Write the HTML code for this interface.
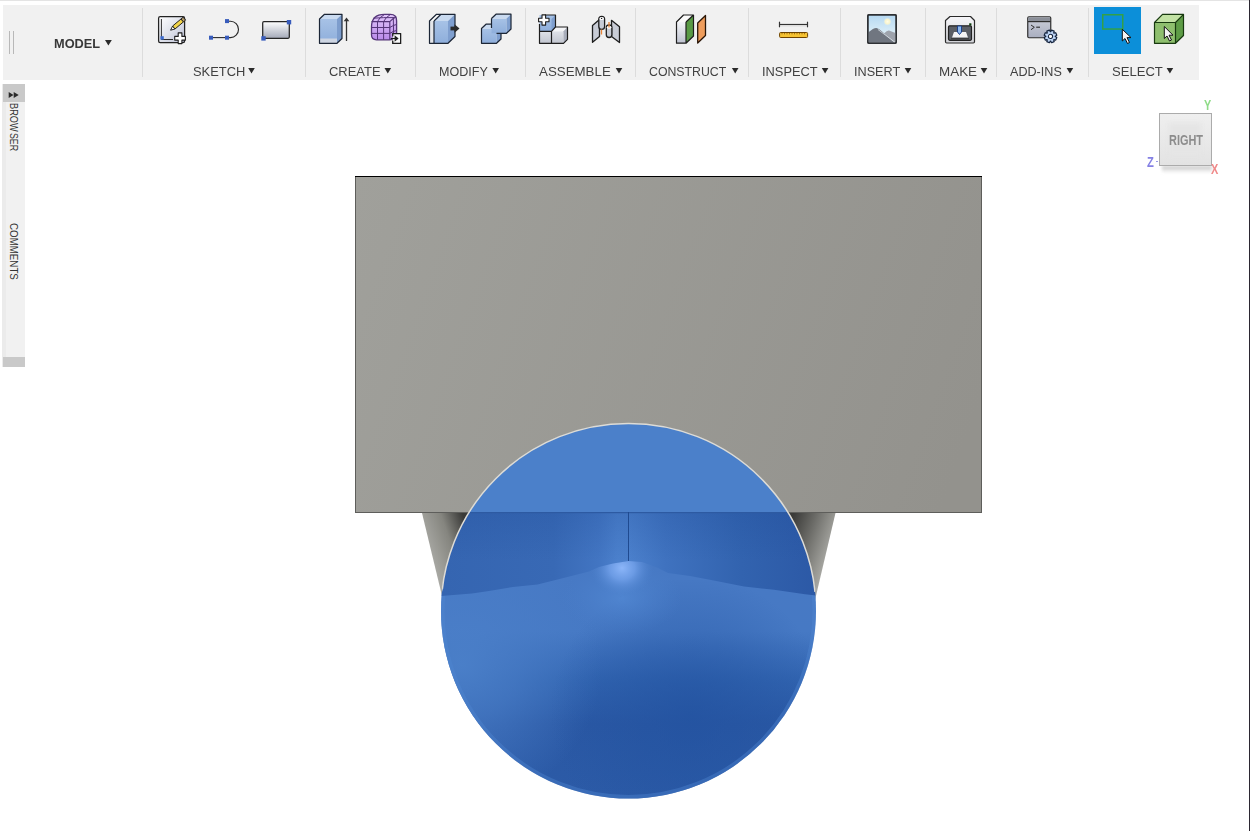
<!DOCTYPE html>
<html><head><meta charset="utf-8">
<style>
html,body{margin:0;padding:0;}
body{width:1250px;height:831px;position:relative;overflow:hidden;background:#fff;font-family:"Liberation Sans",sans-serif;}
.abs{position:absolute;}
#topline{left:0;top:0;width:1249px;height:1px;background:#e4e4e4;}
#rightline{left:1249px;top:0;width:1px;height:831px;background:#2b2731;}
#toolbar{left:3px;top:5px;width:1196px;height:75px;background:#f1f1f1;}
.div{position:absolute;top:8px;width:1px;height:69px;background:#dcdcdc;}
.lbl{position:absolute;top:64px;font-size:13.5px;color:#404040;white-space:nowrap;line-height:16px;transform-origin:0 0;}
.tri{position:absolute;width:0;height:0;border-left:3.5px solid transparent;border-right:3.5px solid transparent;border-top:5px solid #2e2e2e;}
svg.ic{position:absolute;overflow:visible;}
#sidebar{left:2px;top:84px;width:23px;height:283px;background:linear-gradient(90deg,#ebebeb 0,#ebebeb 4px,#f1f1f1 4px);}
#sbhead{left:3px;top:84px;width:22px;height:18px;background:#c9c9c9;}
#sbfoot{left:3px;top:357px;width:22px;height:10px;background:#c9c9c9;}
.vtxt{position:absolute;font-size:10px;color:#333;white-space:nowrap;transform-origin:0 0;transform:rotate(90deg);line-height:10px;}
</style></head>
<body>
<div class="abs" id="topline"></div>
<div class="abs" id="rightline"></div>
<div class="abs" id="toolbar"></div>

<!-- grip -->
<div class="abs" style="left:9px;top:31px;width:1px;height:23px;background:#b8b8b8"></div>
<div class="abs" style="left:13px;top:31px;width:1px;height:23px;background:#b8b8b8"></div>

<!-- dividers -->
<div class="div" style="left:142px"></div>
<div class="div" style="left:305px"></div>
<div class="div" style="left:415px"></div>
<div class="div" style="left:525px"></div>
<div class="div" style="left:635px"></div>
<div class="div" style="left:748px"></div>
<div class="div" style="left:840px"></div>
<div class="div" style="left:925px"></div>
<div class="div" style="left:996px"></div>
<div class="div" style="left:1088px"></div>

<!-- LABELS -->
<div class="lbl" style="left:54px;top:36px;font-weight:bold;color:#383838;transform:scaleX(0.945)">MODEL</div>
<div class="lbl" style="left:193.0px;transform:scaleX(0.954)">SKETCH</div>
<div class="lbl" style="left:329.0px;transform:scaleX(0.959)">CREATE</div>
<div class="lbl" style="left:439.0px;transform:scaleX(0.93)">MODIFY</div>
<div class="lbl" style="left:538.6px;transform:scaleX(0.986)">ASSEMBLE</div>
<div class="lbl" style="left:649.0px;transform:scaleX(0.912)">CONSTRUCT</div>
<div class="lbl" style="left:762.0px;transform:scaleX(0.95)">INSPECT</div>
<div class="lbl" style="left:853.8px;transform:scaleX(0.938)">INSERT</div>
<div class="lbl" style="left:939.0px;transform:scaleX(0.994)">MAKE</div>
<div class="lbl" style="left:1009.6px;transform:scaleX(0.933)">ADD-INS</div>
<div class="lbl" style="left:1112.0px;transform:scaleX(0.968)">SELECT</div>
<svg class="ic" style="left:0;top:0" width="1250" height="80"><g fill="#2b2b2b"><polygon points="105,40 111.8,40 108.4,45.5"/><polygon points="248.2,67.9 254.8,67.9 251.5,73.4"/><polygon points="384.5,67.9 391.1,67.9 387.8,73.4"/><polygon points="492.4,67.9 499.0,67.9 495.7,73.4"/><polygon points="615.7,67.9 622.3,67.9 619.0,73.4"/><polygon points="731.9,67.9 738.5,67.9 735.2,73.4"/><polygon points="821.8,67.9 828.4,67.9 825.1,73.4"/><polygon points="904.7,67.9 911.3,67.9 908.0,73.4"/><polygon points="980.7,67.9 987.3,67.9 984.0,73.4"/><polygon points="1066.6,67.9 1073.2,67.9 1069.9,73.4"/><polygon points="1166.6,67.9 1173.2,67.9 1169.9,73.4"/></g></svg>
<!-- /LABELS -->

<!-- ICONS -->
<svg class="ic" style="left:0;top:0" width="1250" height="60" viewBox="0 0 1250 60">
<defs>
 <linearGradient id="gSk" x1="0" y1="0" x2="1" y2="1"><stop offset="0" stop-color="#ffffff"/><stop offset="0.55" stop-color="#dcdfe9"/><stop offset="1" stop-color="#b9bdd2"/></linearGradient>
 <linearGradient id="gRc" x1="0" y1="0" x2="0" y2="1"><stop offset="0" stop-color="#ffffff"/><stop offset="1" stop-color="#a4a9b8"/></linearGradient>
 <linearGradient id="gBlueF" x1="0" y1="0" x2="0" y2="1"><stop offset="0" stop-color="#a7c2e6"/><stop offset="1" stop-color="#8eaedb"/></linearGradient>
 <linearGradient id="gPur" x1="0" y1="0" x2="0" y2="1"><stop offset="0" stop-color="#e2c6fb"/><stop offset="1" stop-color="#b98ae9"/></linearGradient>
 <linearGradient id="gGrayF" x1="0" y1="0" x2="0" y2="1"><stop offset="0" stop-color="#dfe2e8"/><stop offset="1" stop-color="#c2c6d0"/></linearGradient>
 <linearGradient id="gCon" x1="0" y1="0" x2="0" y2="1"><stop offset="0" stop-color="#f4f5f8"/><stop offset="1" stop-color="#bfc3d0"/></linearGradient>
 <linearGradient id="gSky" x1="0" y1="0" x2="0" y2="1"><stop offset="0" stop-color="#b5d8f1"/><stop offset="0.6" stop-color="#d8ecf7"/><stop offset="1" stop-color="#e8f3f8"/></linearGradient>
 <linearGradient id="gMk" x1="0" y1="0" x2="0" y2="1"><stop offset="0" stop-color="#f6f6f9"/><stop offset="1" stop-color="#d2d3d8"/></linearGradient>
 <linearGradient id="gAd" x1="0" y1="0" x2="0" y2="1"><stop offset="0" stop-color="#cdd0da"/><stop offset="1" stop-color="#a9aec0"/></linearGradient>
 <radialGradient id="gSun"><stop offset="0" stop-color="#fffde8"/><stop offset="0.6" stop-color="#fff6c8" stop-opacity="0.9"/><stop offset="1" stop-color="#d8ecf7" stop-opacity="0"/></radialGradient>
</defs>

<!-- SKETCH: create sketch -->
<rect x="158.6" y="16.6" width="26" height="26" rx="1.6" fill="url(#gSk)" stroke="#232323" stroke-width="1.25"/>
<polyline points="161.4,19 161.4,39.5 173,39.5" fill="none" stroke="#2e2e2e" stroke-width="1"/>
<rect x="160.4" y="36.2" width="3.4" height="3.4" fill="#3c6cd0"/>
<g transform="translate(170.6 30.2) rotate(-40)">
 <polygon points="0,0 4.2,-1.9 4.2,1.9" fill="#fff" stroke="#1e1e1e" stroke-width="0.9" stroke-linejoin="round"/>
 <rect x="4.2" y="-1.9" width="11" height="3.8" fill="#f2d448" stroke="#1e1e1e" stroke-width="0.9"/>
 <rect x="15.2" y="-1.9" width="2.8" height="3.8" fill="#b59b68" stroke="#1e1e1e" stroke-width="0.9"/>
</g>
<path d="M178.2 32.9 h3.7 v3.5 h3.5 v3.7 h-3.5 v3.5 h-3.7 v-3.5 h-3.5 v-3.7 h3.5 z" fill="#fff" stroke="#1e1e1e" stroke-width="1.1" stroke-linejoin="round"/>
<!-- SKETCH: arc -->
<line x1="211" y1="37.6" x2="227" y2="37.6" stroke="#2a2a2a" stroke-width="1.1"/>
<path d="M227 21.2 L230.5 21.2 A8 8.2 0 0 1 230.5 37.6 L227 37.6" fill="none" stroke="#2a2a2a" stroke-width="1.15"/>
<rect x="209" y="35.7" width="4" height="4" fill="#385cbc"/>
<rect x="225" y="35.7" width="4" height="4" fill="#385cbc"/>
<rect x="225" y="19.1" width="4" height="4" fill="#385cbc"/>

<!-- SKETCH: rectangle -->
<rect x="262.7" y="21.7" width="26.6" height="16.6" rx="1.2" fill="url(#gRc)" stroke="#262626" stroke-width="1.25"/>
<rect x="261.3" y="36.2" width="4.4" height="4.4" fill="#385cbc"/>
<rect x="286.8" y="20" width="4.4" height="4.4" fill="#385cbc"/>

<!-- CREATE: extrude -->
<polygon points="319.5,19 337,19 337,43.3 319.5,43.3" fill="url(#gBlueF)"/>
<polygon points="319.5,38.5 337,38.5 337,43.3 319.5,43.3" fill="#cdd5e2"/>
<polygon points="319.5,19 324.5,14.3 342,14.3 337,19" fill="#cadbf1"/>
<polygon points="337,19 342,14.3 342,38.5 337,43.3" fill="#7d9dcd"/>
<path d="M319.5 19 L324.5 14.3 L342 14.3 L342 38.5 L337 43.3 L319.5 43.3 Z" fill="none" stroke="#1c2636" stroke-width="1.2" stroke-linejoin="round"/>
<line x1="346.5" y1="41" x2="346.5" y2="20" stroke="#333" stroke-width="1.3"/>
<polygon points="343.7,21.3 346.5,17.4 349.3,21.3" fill="#333"/>

<!-- CREATE: form -->
<path d="M371.5 27 Q371.5 14.4 384.5 14.4 L390.5 14.4 Q396.6 14.4 396.6 21 L396.6 32.5 Q396.6 39.8 389.5 39.8 L376.5 39.8 Q371.5 39.8 371.5 34.8 Z" fill="url(#gPur)" stroke="#553579" stroke-width="1.3"/>
<path d="M371.5 21.6 H389.8 V39.8 M389.8 21.6 Q393.5 18 396.4 16.8" fill="none" stroke="#553579" stroke-width="1.15"/>
<path d="M377.5 21.6 V39.8 M383.6 21.6 V39.8 M371.5 27.5 H389.8 M371.5 33.4 H389.8 M377.5 21.6 Q379.5 17.2 384 14.8 M383.6 21.6 Q385.8 17.2 390 14.8 M373.2 18.2 Q383 17.4 394.5 17.6 M389.8 27.5 Q393.5 25 396.5 24.5 M389.8 33.4 Q393.5 31 396.5 30.5 M393.3 18.3 Q393.7 28 393.3 37.8" fill="none" stroke="#553579" stroke-width="1"/>
<path d="M392.8 33.6 H400.6 V43.4 H392.8 V40.6 M392.8 36.4 V33.6" fill="#fafafa" stroke="#1e1e1e" stroke-width="1.1"/>
<rect x="393.3" y="34.1" width="6.8" height="8.8" fill="#fafafa"/>
<path d="M400.6 33.6 V43.4 H392.8 V40.8 M392.8 36.2 V33.6 H400.6" fill="none" stroke="#1e1e1e" stroke-width="1.1"/>
<line x1="390.8" y1="38.5" x2="395" y2="38.5" stroke="#1e1e1e" stroke-width="1.2"/>
<polygon points="394.6,35.3 398.6,38.5 394.6,41.7" fill="#1e1e1e"/>

<!-- MODIFY: press pull -->
<polygon points="429.5,21 434,21 434,43.3 429.5,43.3" fill="#e4e6ea"/>
<polygon points="429.5,21 436.5,14.3 441,14.3 434,21" fill="#fbfbfb"/>
<polygon points="434,21 448,21 448,43.3 434,43.3" fill="url(#gBlueF)"/>
<polygon points="434,21 441,14.3 455,14.3 448,21" fill="#c9daf0"/>
<polygon points="448,21 455,14.3 455,36.5 448,43.3" fill="#7f9fcf"/>
<path d="M429.5 21 L436.5 14.3 L455 14.3 L455 36.5 L448 43.3 L429.5 43.3 Z M434 21 L441 14.3 M434 21 V43.3" fill="none" stroke="#1c2636" stroke-width="1.2" stroke-linejoin="round"/>
<rect x="450.5" y="26.6" width="4.5" height="3.8" fill="#2a2a2a"/>
<polygon points="454.5,24.3 459.5,28.5 454.5,32.7" fill="#2a2a2a"/>

<!-- MODIFY: move -->
<polygon points="481.5,28.5 496.5,28.5 496.5,43.3 481.5,43.3" fill="url(#gBlueF)"/>
<polygon points="481.5,28.5 486,24.2 501,24.2 496.5,28.5" fill="#c9daf0"/>
<polygon points="496.5,28.5 501,24.2 501,39 496.5,43.3" fill="#7f9fcf"/>
<path d="M481.5 28.5 L486 24.2 L501 24.2 L501 39 L496.5 43.3 L481.5 43.3 Z" fill="none" stroke="#1c2636" stroke-width="1.2" stroke-linejoin="round"/>
<polygon points="491.5,18.5 506.5,18.5 506.5,33.3 491.5,33.3" fill="url(#gBlueF)"/>
<polygon points="491.5,18.5 496,14.2 511,14.2 506.5,18.5" fill="#c9daf0"/>
<polygon points="506.5,18.5 511,14.2 511,29 506.5,33.3" fill="#7f9fcf"/>
<path d="M491.5 18.5 L496 14.2 L511 14.2 L511 29 L506.5 33.3 L496.5 33.3 M491.5 18.5 L491.5 28" fill="none" stroke="#1c2636" stroke-width="1.2" stroke-linejoin="round"/>

<!-- ASSEMBLE: new component -->
<polygon points="539.5,31.3 551.5,31.3 551.5,43.3 539.5,43.3" fill="url(#gGrayF)"/>
<polygon points="551.5,31.3 563.5,31.3 563.5,43.3 551.5,43.3" fill="url(#gGrayF)"/>
<polygon points="555.5,27 567.5,27 563.5,31.3 551.5,31.3" fill="#f4f5f7"/>
<polygon points="563.5,31.3 567.5,27 567.5,39.3 563.5,43.3" fill="#a9aebb"/>
<polygon points="539.5,15 555.5,15 555.5,27 551.5,31.3 539.5,31.3" fill="url(#gBlueF)"/>
<polygon points="551.5,19 555.5,15 555.5,27 551.5,31.3" fill="#7f9fcf"/>
<path d="M539.5 31.3 V43.3 H563.5 L567.5 39.3 V27 H555.5 V15 H545 M539.5 24 V31.3 H551.5 L555.5 27 M551.5 31.3 V43.3" fill="none" stroke="#1e1e1e" stroke-width="1.2" stroke-linejoin="round"/>
<path d="M542 14.9 h3.6 v3.3 h3.4 v3.6 h-3.4 v3.3 h-3.6 v-3.3 h-3.4 v-3.6 h3.4 z" fill="#fff" stroke="#1e1e1e" stroke-width="1.1" stroke-linejoin="round"/>

<!-- ASSEMBLE: joint -->
<polygon points="592.5,25.5 599.5,19.5 599.5,36.5 592.5,42.3" fill="#c8ccd6" stroke="#1e1e1e" stroke-width="1.3" stroke-linejoin="round"/>
<rect x="598.8" y="16.3" width="5.8" height="13" rx="2.9" fill="#c8ccd6" stroke="#1e1e1e" stroke-width="1.3"/>
<ellipse cx="601.7" cy="18.5" rx="2.3" ry="1.6" fill="#fff"/>
<circle cx="601.6" cy="18.4" r="0.7" fill="#222"/>
<line x1="601.5" y1="29.5" x2="601.5" y2="34.5" stroke="#e8843a" stroke-width="1.3"/>
<polygon points="611.5,20.3 619.5,26.7 619.5,42.5 611.5,36.5" fill="#c8ccd6" stroke="#1e1e1e" stroke-width="1.3" stroke-linejoin="round"/>
<rect x="606.3" y="25" width="5.6" height="12.5" rx="2.8" fill="#c8ccd6" stroke="#1e1e1e" stroke-width="1.3"/>
<ellipse cx="609.1" cy="27.2" rx="2.2" ry="1.5" fill="#fff"/>
<line x1="609" y1="22" x2="609" y2="27.5" stroke="#e8843a" stroke-width="1.3"/>

<!-- CONSTRUCT -->
<polygon points="676.5,22 686,22 686,43.2 676.5,43.2" fill="url(#gCon)"/>
<polygon points="676.5,22 683.5,15 693.5,15 686,22" fill="#fafafa"/>
<polygon points="686,22 693.5,15 693.5,36 686,43.2" fill="#589a45"/>
<path d="M676.5 22 L683.5 15 L693.5 15 L693.5 36 L686 43.2 L676.5 43.2 Z M686 22 L693.5 15 M686 22 V43.2" fill="none" stroke="#1e1e1e" stroke-width="1.2" stroke-linejoin="round"/>
<polygon points="697.7,23 705.5,15.5 705.5,35.5 697.7,43" fill="#ef9d5c" stroke="#2a1608" stroke-width="1.3" stroke-linejoin="round"/>

<!-- INSPECT -->
<line x1="779.5" y1="24.5" x2="807.5" y2="24.5" stroke="#333" stroke-width="1.2"/>
<line x1="779.5" y1="21.7" x2="779.5" y2="27.3" stroke="#333" stroke-width="1.2"/>
<line x1="807.5" y1="21.7" x2="807.5" y2="27.3" stroke="#333" stroke-width="1.2"/>
<line x1="781" y1="26" x2="806" y2="26" stroke="#ddd" stroke-width="1"/>
<rect x="779.6" y="32.5" width="28" height="5" rx="1" fill="#f6c333" stroke="#6e4300" stroke-width="1"/>
<path d="M782 33 v1.3 M784.5 33 v1.3 M787 33 v1.3 M789.5 33 v1.3 M792 33 v1.3 M794.5 33 v1.3 M797 33 v1.3 M799.5 33 v1.3 M802 33 v1.3 M804.5 33 v1.3" stroke="#9a6a10" stroke-width="0.9"/>

<!-- INSERT -->
<rect x="867.75" y="14.75" width="28.5" height="28.5" rx="1.5" fill="url(#gSky)" stroke="#2e3134" stroke-width="1.5"/>
<circle cx="887.5" cy="21.6" r="4.2" fill="url(#gSun)"/>
<path d="M868.5 32.3 Q874 27.5 876.5 28 Q878.5 28.3 882 31.5 L893 41 L895.5 42.5 L868.5 42.5 Z" fill="#707680"/>
<path d="M884 33.5 Q887 30.3 889 30.5 L895.5 33 L895.5 42.5 L894 42.5 Z" fill="#9ea3ac"/>
<path d="M878 29.5 L895 42.3" stroke="#e6eef4" stroke-width="0.9" opacity="0.8"/>
<rect x="867.75" y="14.75" width="28.5" height="28.5" rx="1.5" fill="none" stroke="#2e3134" stroke-width="1.5"/>

<!-- MAKE -->
<path d="M950 16.5 L970.5 16.5 L974.5 20.5 L974.5 41.8 Q974.5 43 973.3 43 L946.7 43 Q945.5 43 945.5 41.8 L945.5 20.5 Z" fill="url(#gMk)" stroke="#2a2a2a" stroke-width="1.2" stroke-linejoin="round"/>
<rect x="948.5" y="25.8" width="23" height="14.5" rx="1.2" fill="#5a5e66" stroke="#222" stroke-width="1.2"/>
<polygon points="952,37.5 968,37.5 966,32 954,32" fill="#f4f4f6"/>
<line x1="951" y1="38.7" x2="969" y2="38.7" stroke="#333" stroke-width="0.9"/>
<polygon points="957.5,26 961.5,26 961.5,32 959.5,34.5 957.5,32" fill="#8db9ef" stroke="#1b3f8a" stroke-width="1"/>
<rect x="969.2" y="23.3" width="2.2" height="2.2" fill="#0c3d0c"/>

<!-- ADD-INS -->
<rect x="1027.75" y="16.75" width="23" height="21" rx="1.2" fill="url(#gAd)" stroke="#2e2e2e" stroke-width="1.2"/>
<rect x="1028.5" y="17.5" width="21.5" height="3.8" fill="#8b8f99"/>
<line x1="1028" y1="21.6" x2="1050.5" y2="21.6" stroke="#2e2e2e" stroke-width="1.2"/>
<path d="M1031 25 L1034.3 27.3 L1031 29.7" fill="none" stroke="#2a2a2a" stroke-width="1"/>
<line x1="1036.2" y1="27.2" x2="1040" y2="27.2" stroke="#2a2a2a" stroke-width="1.1"/>
<g transform="translate(1050.5 36.4) rotate(22.5)">
 <path d="M4.40 -1.66 L6.25 -1.40 L6.25 1.40 L4.40 1.66 L4.28 1.94 L5.40 3.43 L3.43 5.40 L1.94 4.28 L1.66 4.40 L1.40 6.25 L-1.40 6.25 L-1.66 4.40 L-1.94 4.28 L-3.43 5.40 L-5.40 3.43 L-4.28 1.94 L-4.40 1.66 L-6.25 1.40 L-6.25 -1.40 L-4.40 -1.66 L-4.28 -1.94 L-5.40 -3.43 L-3.43 -5.40 L-1.94 -4.28 L-1.66 -4.40 L-1.40 -6.25 L1.40 -6.25 L1.66 -4.40 L1.94 -4.28 L3.43 -5.40 L5.40 -3.43 L4.28 -1.94 Z" fill="#bcd3f4" stroke="#15243e" stroke-width="1.2" stroke-linejoin="round"/>
 <circle cx="0" cy="0" r="2.1" fill="#fff" stroke="#15243e" stroke-width="1"/>
</g>

<!-- SELECT: window select (active) -->
<rect x="1094" y="7" width="47" height="47" fill="#0c8fd9"/>
<rect x="1102.75" y="14.75" width="20" height="14.3" fill="none" stroke="#33a046" stroke-width="1.5"/>
<path d="M1122.3 29.3 L1122.3 41 L1125 38.5 L1127.5 43.5 L1129.5 42.5 L1127 37.6 L1131 37.6 Z" fill="#f4f4f4" stroke="#111" stroke-width="1" stroke-linejoin="round"/>

<!-- SELECT: cube -->
<polygon points="1154.5,22.5 1175.5,22.5 1175.5,43.3 1154.5,43.3" fill="#8ebf6e"/>
<polygon points="1154.5,22.5 1162.5,14.3 1183.5,14.3 1175.5,22.5" fill="#c2e2a4"/>
<polygon points="1175.5,22.5 1183.5,14.3 1183.5,35.5 1175.5,43.3" fill="#5e9c46"/>
<path d="M1154.5 22.5 L1162.5 14.3 L1183.5 14.3 L1183.5 35.5 L1175.5 43.3 L1154.5 43.3 Z M1154.5 22.5 H1175.5 L1183.5 14.3 M1175.5 22.5 V43.3" fill="none" stroke="#183a10" stroke-width="1.2" stroke-linejoin="round"/>
<path d="M1164.3 26.5 L1164.3 38.5 L1167 36 L1169.5 41 L1171.5 40 L1169 35.2 L1173 35.2 Z" fill="#f4f4f4" stroke="#111" stroke-width="1" stroke-linejoin="round"/>
</svg>

<!-- /ICONS -->

<!-- VIEWCUBE -->
<div class="abs" style="left:1162px;top:166px;width:50px;height:7px;background:linear-gradient(#c4c4c4,rgba(230,230,230,0));filter:blur(1.5px)"></div>
<div class="abs" style="left:1159px;top:113px;width:51px;height:51px;border:1px solid #ababab;background:linear-gradient(#efefef,#e3e3e3)"></div>
<div class="abs" style="left:1169px;top:123px;width:32px;height:32px;background:#e5e5e5;filter:blur(2px)"></div>
<div class="abs" style="left:1168.5px;top:131.5px;font:bold 14px/16px 'Liberation Sans',sans-serif;color:#8c8c8c;transform:scaleX(0.78);transform-origin:0 0;white-space:nowrap">RIGHT</div>
<div class="abs" style="left:1203.5px;top:97px;font:bold 15px/16px 'Liberation Sans',sans-serif;color:#8fdc88;white-space:nowrap;transform:scaleX(0.72);transform-origin:0 0">Y</div>
<div class="abs" style="left:1147px;top:153.5px;font:bold 14px/16px 'Liberation Sans',sans-serif;color:#8480e4;white-space:nowrap;transform:scaleX(0.8);transform-origin:0 0">Z</div>
<div class="abs" style="left:1156px;top:160.5px;width:2px;height:1.5px;background:#9a98e8"></div>
<div class="abs" style="left:1210.5px;top:161px;font:bold 14px/16px 'Liberation Sans',sans-serif;color:#f08a8a;white-space:nowrap;transform:scaleX(0.78);transform-origin:0 0">X</div>
<!-- /VIEWCUBE -->

<!-- sidebar -->
<div class="abs" id="sidebar"></div>
<div class="abs" id="sbhead"></div>
<div class="abs" id="sbfoot"></div>
<svg class="ic" style="left:0;top:80px" width="30" height="25"><path d="M8.7 12 L13.5 15 L8.7 18 Z M13.7 12 L18.7 15 L13.7 18 Z" fill="#2a2a2a"/></svg>
<div class="vtxt" style="left:18px;top:103px;transform:rotate(90deg) scaleX(0.92)">BROW</div><div class="vtxt" style="left:18px;top:133.3px;transform:rotate(90deg) scaleX(0.88)">SER</div>
<div class="vtxt" style="left:18px;top:223px;transform:rotate(90deg) scaleX(0.975)">COMMENTS</div>

<!-- MODEL VIEW -->
<svg class="abs" style="left:0;top:0" width="1250" height="831" id="model">
<defs>
 <linearGradient id="rectg" x1="356" y1="177" x2="981" y2="400" gradientUnits="userSpaceOnUse">
  <stop offset="0" stop-color="#a0a09b"/>
  <stop offset="1" stop-color="#93928d"/>
 </linearGradient>
 <linearGradient id="coneL" x1="425" y1="545" x2="468" y2="530" gradientUnits="userSpaceOnUse">
  <stop offset="0" stop-color="#aaaaa5"/>
  <stop offset="0.55" stop-color="#85857f"/>
  <stop offset="1" stop-color="#3a3a38"/>
 </linearGradient>
 <linearGradient id="coneR" x1="788" y1="530" x2="832" y2="545" gradientUnits="userSpaceOnUse">
  <stop offset="0" stop-color="#3a3a38"/>
  <stop offset="0.45" stop-color="#6a6a66"/>
  <stop offset="1" stop-color="#a8a8a3"/>
 </linearGradient>
 <clipPath id="circ"><circle cx="628.5" cy="611" r="187.5"/></clipPath>
 <clipPath id="rimclip"><rect x="355" y="176" width="627" height="337"/><polygon points="422,513 835.5,513 815,592 443,592"/></clipPath>
 <linearGradient id="bandg" x1="441" y1="0" x2="816" y2="0" gradientUnits="userSpaceOnUse">
  <stop offset="0" stop-color="#3565b1"/>
  <stop offset="0.3" stop-color="#3869b5"/>
  <stop offset="0.42" stop-color="#4275c2"/>
  <stop offset="0.47" stop-color="#4b80cc"/>
  <stop offset="0.499" stop-color="#4a7fcb"/>
  <stop offset="0.501" stop-color="#4b80cc"/>
  <stop offset="0.6" stop-color="#3f72bf"/>
  <stop offset="0.8" stop-color="#3263af"/>
  <stop offset="1" stop-color="#2c59a6"/>
 </linearGradient>
 <linearGradient id="lowg" x1="0" y1="585" x2="0" y2="798" gradientUnits="userSpaceOnUse">
  <stop offset="0" stop-color="#4779c4"/>
  <stop offset="0.22" stop-color="#4679c4"/>
  <stop offset="0.45" stop-color="#3164b0"/>
  <stop offset="0.65" stop-color="#2a58a4"/>
  <stop offset="1" stop-color="#2c5ba7"/>
 </linearGradient>
 <radialGradient id="peak" cx="622" cy="568" r="32" gradientUnits="userSpaceOnUse" gradientTransform="translate(622 568) scale(1 0.9) translate(-622 -568)">
  <stop offset="0" stop-color="#8cb6f9" stop-opacity="1"/>
  <stop offset="0.4" stop-color="#74a3ec" stop-opacity="0.8"/>
  <stop offset="1" stop-color="#4a7fcb" stop-opacity="0"/>
 </radialGradient>
 <linearGradient id="bandtop" x1="0" y1="513" x2="0" y2="560" gradientUnits="userSpaceOnUse">
  <stop offset="0" stop-color="#1d4a96" stop-opacity="0.22"/>
  <stop offset="1" stop-color="#1d4a96" stop-opacity="0"/>
 </linearGradient>
 <radialGradient id="trail" cx="622" cy="598" r="60" gradientUnits="userSpaceOnUse" gradientTransform="translate(622 598) scale(1 0.6) translate(-622 -598)">
  <stop offset="0" stop-color="#5288d3" stop-opacity="0.8"/>
  <stop offset="1" stop-color="#4a7fcb" stop-opacity="0"/>
 </radialGradient>
 <radialGradient id="leftlight" cx="462" cy="665" r="140" gradientUnits="userSpaceOnUse">
  <stop offset="0" stop-color="#4c81ca" stop-opacity="0.9"/>
  <stop offset="0.4" stop-color="#4a7ec8" stop-opacity="0.65"/>
  <stop offset="1" stop-color="#4a7ec8" stop-opacity="0"/>
 </radialGradient>
 <radialGradient id="darkc" cx="690" cy="715" r="140" gradientUnits="userSpaceOnUse">
  <stop offset="0" stop-color="#2252a0" stop-opacity="0.7"/>
  <stop offset="1" stop-color="#2252a0" stop-opacity="0"/>
 </radialGradient>
 <radialGradient id="rim" cx="650" cy="600" r="200" gradientUnits="userSpaceOnUse">
  <stop offset="0.85" stop-color="#4a7ec9" stop-opacity="0"/>
  <stop offset="1" stop-color="#4c80cb" stop-opacity="0.45"/>
 </radialGradient>
</defs>
<rect x="355.5" y="176.5" width="626" height="336" fill="url(#rectg)" stroke="#5e5e5b" stroke-width="1"/>
<line x1="355" y1="176.5" x2="982" y2="176.5" stroke="#000" stroke-width="1"/>
<polygon points="422,513 540,513 540,600 443,600" fill="url(#coneL)"/>
<polygon points="720,513 835.5,513 815,600 720,600" fill="url(#coneR)"/>
<g clip-path="url(#circ)">
 <rect x="430" y="420" width="400" height="400" fill="url(#lowg)"/>
 <rect x="430" y="580" width="400" height="240" fill="url(#leftlight)"/>
 <rect x="430" y="580" width="400" height="240" fill="url(#darkc)"/>
 <rect x="430" y="560" width="400" height="100" fill="url(#trail)"/>
 <circle cx="628.5" cy="611" r="186" fill="none" stroke="#4f86d2" stroke-width="4" opacity="0.4"/>
 <rect x="430" y="420" width="400" height="92.5" fill="#4b80ca"/>
 <path d="M430 513 L830 513 L830 597 L805 594.2 L774 589.7 L744 586.6 L713.6 580.5 L690 576 L668 573 L657 567.5 L642 562 L628.5 561 L613 563.4 L599 567 L589 571.4 L563.5 578 L537.5 584.6 L513 587 L489 591 L472 593.5 L430 597 Z" fill="url(#bandg)"/>
 <rect x="430" y="513" width="400" height="50" fill="url(#bandtop)"/>
 <clipPath id="belowpk"><path d="M430 597 L472 593.5 L489 591 L513 587 L537.5 584.6 L563.5 578 L589 571.4 L599 567 L613 563.4 L628.5 561 L642 562 L657 567.5 L668 573 L690 576 L713.6 580.5 L744 586.6 L774 589.7 L805 594.2 L830 597 L830 700 L430 700 Z"/></clipPath>
 <rect x="570" y="550" width="120" height="60" fill="url(#peak)" clip-path="url(#belowpk)"/>
 <rect x="430" y="512" width="400" height="1.2" fill="#2d5aa2"/>
 <rect x="628" y="512" width="1" height="49" fill="#1f4a90"/>
</g>
<circle cx="628.5" cy="611" r="187.5" fill="none" stroke="#dedcd6" stroke-width="1.5" clip-path="url(#rimclip)"/>
</svg>

</body></html>
